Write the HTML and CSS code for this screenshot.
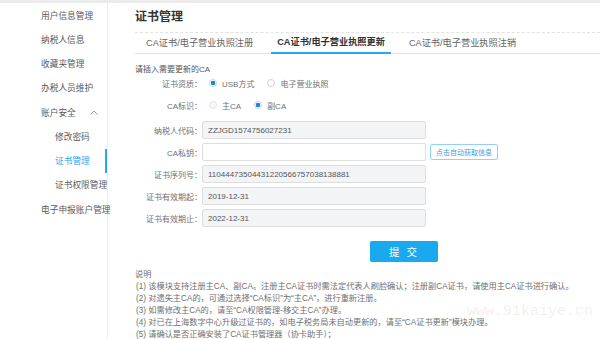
FILE: index.html
```html
<html lang="zh-CN">
<head>
  <meta charset="UTF-8">
  <meta name="viewport" content="width=device-width, initial-scale=1.0">
  <link rel="stylesheet" href="styles.css">
  <title>证书管理</title>
</head>
<body>
<div class="layout">
  <aside class="sidebar">
    <ul class="menu">
      <li class="menu-item">用户信息管理</li>
      <li class="menu-item">纳税人信息</li>
      <li class="menu-item">收藏夹管理</li>
      <li class="menu-item">办税人员维护</li>
      <li class="menu-item">账户安全
        <svg class="arrow" width="8" height="5" viewBox="0 0 8 5"><polyline points="0.5,4.5 4,1 7.5,4.5" fill="none" stroke="#999" stroke-width="0.9"/></svg>
      </li>
      <li class="menu-item sub">修改密码</li>
      <li class="menu-item sub active">证书管理</li>
      <li class="menu-item sub">证书权限管理</li>
      <li class="menu-item">电子申报账户管理</li>
    </ul>
  </aside>

  <main class="content">
    <h1 class="page-title">证书管理</h1>
    <div class="tabs">
      <span class="tab">CA证书/电子营业执照注册</span>
      <span class="tab active">CA证书/电子营业执照更新</span>
      <span class="tab">CA证书/电子营业执照注销</span>
    </div>

    <form class="cert-form">
      <p class="hint">请插入需要更新的CA</p>
      <div class="row radio-row">
        <label class="row-label">证书资质：</label>
        <span class="radio on"></span><span class="radio-text">USB方式</span>
        <span class="radio"></span><span class="radio-text">电子营业执照</span>
      </div>
      <div class="row radio-row">
        <label class="row-label">CA标识：</label>
        <span class="radio disabled"></span><span class="radio-text">主CA</span>
        <span class="radio on"></span><span class="radio-text">副CA</span>
      </div>
      <div class="row">
        <label class="row-label">纳税人代码：</label>
        <input class="field" type="text" value="ZZJGD1574756027231" readonly>
      </div>
      <div class="row">
        <label class="row-label">CA私钥：</label>
        <input class="field editable" type="text">
        <button type="button" class="fetch-btn">点击自动获取信息</button>
      </div>
      <div class="row">
        <label class="row-label">证书序列号：</label>
        <input class="field" type="text" value="11044473504431220566757038138881" readonly>
      </div>
      <div class="row">
        <label class="row-label">证书有效期起：</label>
        <input class="field" type="text" value="2019-12-31" readonly>
      </div>
      <div class="row">
        <label class="row-label">证书有效期止：</label>
        <input class="field" type="text" value="2022-12-31" readonly>
      </div>
      <button type="submit" class="submit-btn">提 交</button>
    </form>

    <div class="notes">
      <p class="notes-title">说明</p>
      <p>(1) 该模块支持注册主CA、副CA。注册主CA证书时需法定代表人刷脸确认；注册副CA证书，请使用主CA证书进行确认。</p>
      <p>(2) 对遗失主CA的，可通过选择“CA标识”为“主CA”，进行重新注册。</p>
      <p>(3) 如需修改主CA的，请至“CA权限管理-移交主CA”办理。</p>
      <p>(4) 对已在上海数字中心升级过证书的，如电子税务局未自动更新的，请至“CA证书更新”模块办理。</p>
      <p>(5) 请确认是否正确安装了CA证书管理器（协卡助手）；</p>
    </div>
  </main>
</div>
<div class="watermark">www.91kaiye.cn</div>
</body>
</html>
```

FILE: styles.css
```css
body {
  margin: 0;
  padding: 0;
  font-family: "Liberation Sans", "Noto Sans CJK SC", sans-serif;
  background: #fff;
  color: #555;
  overflow: hidden;
}

.layout {
  display: flex;
  height: 339px;
  border-top: 3px solid #ebebeb;
  box-sizing: border-box;
}

/* sidebar */
.sidebar {
  width: 108px;
  flex-shrink: 0;
  border-right: 1px solid #ededed;
  box-sizing: border-box;
}
.menu {
  list-style: none;
  margin: 0;
  padding: 0;
}
.menu-item {
  display: flex;
  align-items: center;
  height: 24.25px;
  padding-left: 41px;
  font-size: 8.7px;
  color: #5a5a5a;
  white-space: nowrap;
}
.menu-item.sub {
  padding-left: 55px;
}
.menu-item.active {
  color: #2aa6ee;
  box-shadow: inset -2px 0 #2aa6ee;
}
.arrow {
  margin-left: auto;
  margin-right: 9px;
}

/* main */
.content {
  flex: 1;
  padding-left: 27px;
}
.page-title {
  margin: 0;
  padding-top: 5px;
  padding-bottom: 6px;
  line-height: 18px;
  font-size: 12px;
  font-weight: bold;
  color: #333;
  border-bottom: 1px dashed #e2e2e2;
}

.tabs {
  display: flex;
  gap: 12px;
  padding-left: 5px;
  border-bottom: 1px solid #e3e3e3;
}
.tab {
  padding: 0 6px;
  line-height: 20px;
  font-size: 9.2px;
  color: #666;
}
.tab.active {
  color: #333;
  font-weight: bold;
  border-bottom: 2px solid #2aa6ee;
  line-height: 19px;
  margin-bottom: -1px;
}

/* form */
.cert-form {
  font-size: 8px;
  color: #707070;
}
.hint {
  margin: 11px 0 0;
  line-height: 10px;
  color: #555;
}
.row {
  display: flex;
  align-items: center;
  height: 18px;
  margin-top: 4px;
}
.radio-row {
  height: 16px;
  margin-top: 6px;
}
.radio-row:first-of-type {
  margin-top: 0;
}
.radio-row + .row:not(.radio-row) {
  margin-top: 8px;
}
.row-label {
  width: 67px;
  flex-shrink: 0;
  text-align: right;
}
.radio {
  width: 8px;
  height: 8px;
  margin-left: 7px;
  margin-right: 5px;
  border: 1px solid #d2d2d2;
  border-radius: 50%;
  box-sizing: border-box;
  background: #fff;
}
.radio.on {
  background: radial-gradient(circle, #1787e0 0 2px, #fff 2.6px);
}
.radio.disabled {
  border-color: #e6e6e6;
  background: #f7f7f7;
}
.radio-text {
  margin-right: 6px;
}
.field {
  width: 224px;
  height: 18px;
  margin: 0;
  padding: 0 5px;
  box-sizing: border-box;
  border: 1px solid #dedede;
  border-radius: 2px;
  background: #f3f4f6;
  font-family: "Liberation Sans", "Noto Sans CJK SC", sans-serif;
  font-size: 8px;
  color: #555;
  outline: none;
}
.field.editable {
  background: #fff;
}
.fetch-btn {
  margin-left: 4px;
  height: 16px;
  padding: 0 5px;
  border: 1px solid #8fd4f6;
  border-radius: 2px;
  background: #fff;
  font-family: "Liberation Sans", "Noto Sans CJK SC", sans-serif;
  font-size: 7px;
  color: #3a9fe0;
}
.submit-btn {
  display: block;
  width: 68px;
  height: 21px;
  margin: 14px 0 0 235px;
  border: none;
  border-radius: 2px;
  background: #18a9ef;
  color: #fff;
  font-family: "Liberation Sans", "Noto Sans CJK SC", sans-serif;
  font-size: 10.5px;
  letter-spacing: 2px;
}

/* notes */
.notes {
  margin-top: -1px;
  font-size: 8.2px;
  color: #707070;
}
.notes p {
  margin: 0;
  padding-left: 1px;
  line-height: 12px;
  white-space: nowrap;
}
.notes .notes-title {
  padding-left: 0;
}

.watermark {
  position: absolute;
  left: 467px;
  top: 303px;
  font-family: "Liberation Mono", monospace;
  font-size: 15px;
  color: rgba(200, 170, 170, 0.2);
}
```
